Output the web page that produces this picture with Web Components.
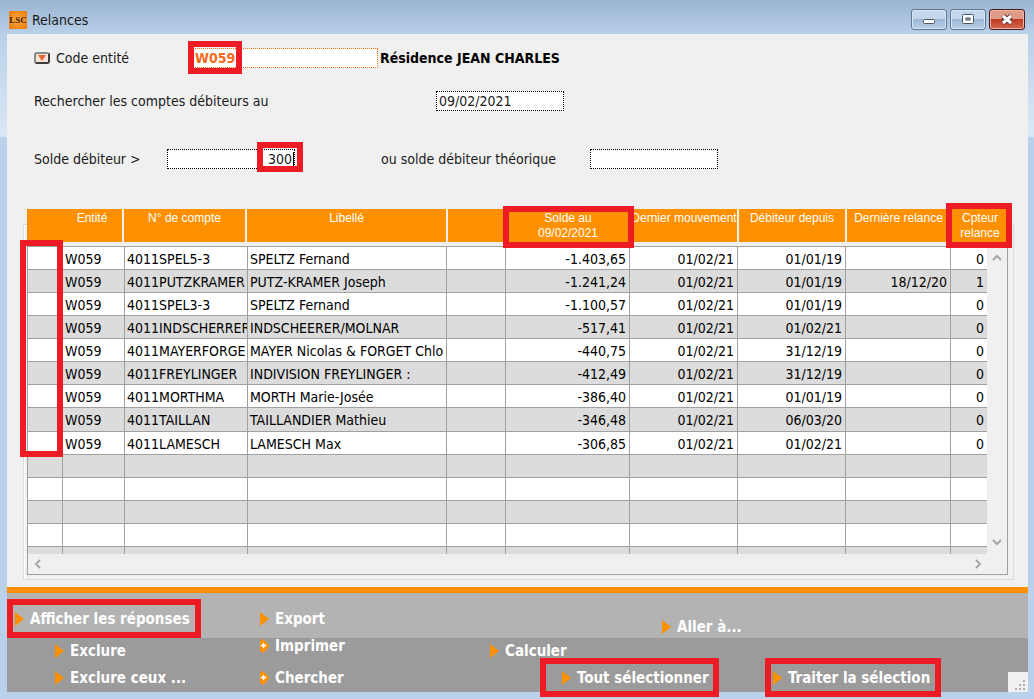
<!DOCTYPE html>
<html lang="fr">
<head>
<meta charset="utf-8">
<title>Relances</title>
<style>
  body {
    margin: 0;
    font-family: "DejaVu Sans Condensed", "DejaVu Sans", sans-serif;
    font-size: 14px;
    line-height: 16px;
    color: #1a1a1a;
  }
</style>
</head>
<body>
<app-window title="Relances">
  <search-form></search-form>
  <debtor-grid></debtor-grid>
  <action-bar slot="footer"></action-bar>
</app-window>

<script>
class RedFrame extends HTMLElement {
  constructor() {
    super();
    this.attachShadow({ mode: 'open' }).innerHTML = `
      <style>
        :host {
          position: absolute;
          box-sizing: border-box;
          border: 6px solid #ed1c24;
          pointer-events: none;
          z-index: 2;
        }
      </style>`;
  }
}
customElements.define('red-frame', RedFrame);


class AppWindow extends HTMLElement {
  constructor() {
    super();
    this.attachShadow({ mode: 'open' });
  }

  connectedCallback() {
    const title = this.getAttribute('title') || '';
    this.removeAttribute('title');

    this.shadowRoot.innerHTML = `
      <style>
        :host {
          display: flex;
          flex-direction: column;
          box-sizing: border-box;
          min-height: 100vh;
          padding: 0 6px 7px 7px;
          background: linear-gradient(#9ab4d1, #b9d0e9 34px, #dbe8f6 136px, #b9d1ea 138px);
        }

        header {
          display: flex;
          align-items: center;
          gap: 5px;
          height: 34px;
          padding: 0 3px 0 2px;
          box-sizing: border-box;
        }

        .logo {
          width: 18px;
          height: 18px;
          margin-top: 5px;
          background: radial-gradient(#ffab3c, #e8780c);
          color: #3a1c00;
          font: bold 9px/18px "Liberation Serif", serif;
          text-align: center;
        }

        h1 {
          flex: 1;
          margin: 6px 0 0;
          font-size: 14px;
          font-weight: normal;
        }

        .buttons {
          display: flex;
          gap: 3px;
          margin-top: 5px;
        }

        button {
          width: 36px;
          height: 21px;
          padding: 0;
          border: 1px solid #5f7690;
          border-radius: 3px;
          background: linear-gradient(#c3d6ec 50%, #9db8d6 50%, #b7cee8);
          box-shadow: inset 0 0 0 1px #d7e5f5;
        }

        .close {
          border-color: #4a1c1c;
          background: linear-gradient(#e09a88 50%, #bf3a22 50%, #d4694f);
          box-shadow: inset 0 0 0 1px #eab5a8;
        }

        svg {
          display: block;
          margin: auto;
        }

        main {
          flex: 1;
          padding: 14px 20px 12px;
          background: #f0f0f0;
        }
      </style>

      <header>
        <span class="logo">LSC</span>
        <h1>${title}</h1>
        <div class="buttons">
          <button aria-label="Réduire">
            <svg width="16" height="13"><rect x="2.500" y="6.500" width="11" height="4" rx="1" fill="#fff" stroke="#4d5666"/></svg>
          </button>
          <button aria-label="Agrandir">
            <svg width="16" height="13"><rect x="2.500" y="1.500" width="11" height="9" rx="1" fill="#fff" stroke="#4d5666"/><rect x="6" y="5" width="4" height="2" fill="#9db8d6" stroke="#4d5666"/></svg>
          </button>
          <button class="close" aria-label="Fermer">
            <svg width="16" height="13"><path d="M4 3l8 7M12 3l-8 7" stroke="#5b3038" stroke-width="5"/><path d="M4 3l8 7M12 3l-8 7" stroke="#fff" stroke-width="3"/></svg>
          </button>
        </div>
      </header>
      <main><slot></slot></main>
      <slot name="footer"></slot>
    `;
  }
}
customElements.define('app-window', AppWindow);


class SearchForm extends HTMLElement {
  constructor() {
    super();
    this.attachShadow({ mode: 'open' });
  }

  connectedCallback() {
    this.shadowRoot.innerHTML = `
      <style>
        :host {
          display: block;
          padding-left: 7px;
          margin-bottom: 40px;
        }

        .row {
          display: flex;
          align-items: center;
          height: 20px;
        }

        .row + .row { margin-top: 23px; }
        .row.last { margin-top: 38px; }

        label { white-space: nowrap; }
        .code { width: 134px; }
        .date { width: 402px; }
        .solde { width: 133px; }
        .theo { width: 209px; margin-left: 86px; }

        .picker {
          width: 16px;
          height: 12px;
          margin-right: 6px;
          padding: 0;
          border: 2px solid #3c3c3c;
          border-top-color: #8a8a8a;
          border-left-color: #8a8a8a;
          border-radius: 3px;
          background: #f6e4da;
        }

        .picker svg { display: block; margin: auto; }

        .field {
          position: relative;
          width: 128px;
        }

        .field.wide { width: 188px; }

        input {
          display: block;
          box-sizing: border-box;
          width: 100%;
          height: 20px;
          margin: 0;
          padding: 0 2px;
          border: 1px dotted #000;
          background: #fff;
          color: inherit;
          font: inherit;
        }

        .wide input {
          border: 1px dotted #ff6a10;
          padding-left: 4px;
          color: #f26a1b;
          font-weight: bold;
        }

        .amount input { text-align: right; }

        .amount::after {
          content: "";
          position: absolute;
          top: 3px;
          right: 1px;
          width: 1px;
          height: 14px;
          background: #000;
        }

        .wide red-frame {
          top: -7px;
          left: -2px;
          width: 54px;
          height: 33px;
        }

        .amount red-frame {
          top: -7px;
          right: -8px;
          width: 46px;
          height: 30px;
        }

        output {
          margin-left: 2px;
          color: #000;
          font-weight: bold;
        }
      </style>

      <div class="row">
        <button class="picker" aria-label="Choisir une entité">
          <svg width="10" height="8"><path d="M1 1h8L5 7z" fill="#e8662a"/></svg>
        </button>
        <label class="code" for="code">Code entité</label>
        <div class="field wide">
          <input id="code" value="W059">
          <red-frame></red-frame>
        </div>
        <output>Résidence JEAN CHARLES</output>
      </div>
      <div class="row">
        <label class="date" for="date">Rechercher les comptes débiteurs au</label>
        <div class="field"><input id="date" value="09/02/2021"></div>
      </div>
      <div class="row last">
        <label class="solde" for="solde">Solde débiteur &gt;</label>
        <div class="field amount">
          <input id="solde" value="300">
          <red-frame></red-frame>
        </div>
        <label class="theo" for="theo">ou solde débiteur théorique</label>
        <div class="field"><input id="theo"></div>
      </div>
    `;
  }
}
customElements.define('search-form', SearchForm);


const ROWS = [
  ['4011SPEL5-3', 'SPELTZ Fernand', '-1.403,65', '01/02/21', '01/01/19', '', '0'],
  ['4011PUTZKRAMER', 'PUTZ-KRAMER Joseph', '-1.241,24', '01/02/21', '01/01/19', '18/12/20', '1'],
  ['4011SPEL3-3', 'SPELTZ Fernand', '-1.100,57', '01/02/21', '01/01/19', '', '0'],
  ['4011INDSCHERRER', 'INDSCHEERER/MOLNAR', '-517,41', '01/02/21', '01/02/21', '', '0'],
  ['4011MAYERFORGE', 'MAYER Nicolas & FORGET Chlo', '-440,75', '01/02/21', '31/12/19', '', '0'],
  ['4011FREYLINGER', 'INDIVISION FREYLINGER :', '-412,49', '01/02/21', '31/12/19', '', '0'],
  ['4011MORTHMA', 'MORTH Marie-Josée', '-386,40', '01/02/21', '01/01/19', '', '0'],
  ['4011TAILLAN', 'TAILLANDIER Mathieu', '-346,48', '01/02/21', '06/03/20', '', '0'],
  ['4011LAMESCH', 'LAMESCH Max', '-306,85', '01/02/21', '01/02/21', '', '0'],
];
const ROW_COUNT = 14;

class DebtorGrid extends HTMLElement {
  constructor() {
    super();
    this.attachShadow({ mode: 'open' });
  }

  connectedCallback() {
    this.shadowRoot.innerHTML = `
      <style>
        :host {
          display: block;
          position: relative;
          isolation: isolate;
        }

        /* group box line round the grid */
        :host::before {
          content: "";
          position: absolute;
          inset: 15px -6px -5px -4px;
          border: 1px solid #dcdcdc;
          box-shadow: inset 1px 1px #fff;
          z-index: -1;
        }

        table {
          width: 100%;
          table-layout: fixed;
          border-collapse: separate;
          border-spacing: 0;
        }

        th {
          position: relative;
          height: 31px;
          padding: 2px 0 0;
          box-sizing: content-box;
          border-left: 2px solid #f0f0f0;
          border-bottom: 4px solid #f0f0f0;
          background: #ff9100;
          background-clip: padding-box;
          color: #fff;
          font: 12px/15px "Liberation Sans", sans-serif;
          vertical-align: top;
          white-space: nowrap;
        }

        th:nth-child(-n+4) { border-left: 0; }
        th:nth-child(2), th:nth-child(3) { border-right: 2px solid #f0f0f0; }

        td {
          height: 20px;
          padding: 2px 3px 0 2px;
          border-top: 1px solid #a0a0a0;
          border-left: 1px solid #a0a0a0;
          background: #fff;
          color: #000;
          line-height: 20px;
          overflow: hidden;
          white-space: nowrap;
        }

        tr:nth-child(even) td { background: #dcdcdc; }
        tr:last-child td { height: 5px; line-height: 5px; }
        .num { text-align: right; }

        tr td.vscroll {
          height: auto;
          padding: 6px 0;
          border-left: 0;
          border-right: 1px solid #a0a0a0;
          background: #f0f0f0;
          line-height: 0;
          vertical-align: top;
        }

        .track {
          display: flex;
          flex-direction: column;
          justify-content: space-between;
          align-items: center;
          height: 295px;
        }

        .hscroll {
          display: flex;
          justify-content: space-between;
          align-items: center;
          height: 21px;
          box-sizing: border-box;
          padding: 0 23px 0 4px;
          border: 1px solid #a0a0a0;
          border-top: 0;
          background: #f0f0f0;
        }

        button {
          width: 12px;
          height: 12px;
          padding: 0;
          border: 0;
          background: none;
        }

        svg {
          display: block;
          fill: none;
          stroke: #a8a8a8;
          stroke-width: 2;
        }

        .checks {
          top: 31px;
          left: -7px;
          width: 43px;
          height: 217px;
        }

        th red-frame { inset: -3px -5px -6px -4px; }
        th:last-child red-frame { inset: -6px -4px -6px -6px; }
      </style>

      <table>
        <colgroup>
          <col style="width: 35px"><col style="width: 62px"><col style="width: 123px">
          <col><col style="width: 59px"><col style="width: 124px">
          <col style="width: 108px"><col style="width: 108px"><col style="width: 105px">
          <col style="width: 37px"><col style="width: 21px">
        </colgroup>
        <thead>
          <tr>
            <th></th>
            <th>Entité</th>
            <th>N° de compte</th>
            <th>Libellé</th>
            <th></th>
            <th>Solde au<br>09/02/2021<red-frame></red-frame></th>
            <th>Dernier mouvement</th>
            <th>Débiteur depuis</th>
            <th>Dernière relance</th>
            <th colspan="2">Cpteur<br>relance<red-frame></red-frame></th>
          </tr>
        </thead>
        <tbody></tbody>
      </table>
      <div class="hscroll">
        <button aria-label="Gauche"><svg width="12" height="12"><path d="M8 2L4 6l4 4"/></svg></button>
        <button aria-label="Droite"><svg width="12" height="12"><path d="M4 2l4 4-4 4"/></svg></button>
      </div>
      <red-frame class="checks"></red-frame>
    `;

    const body = this.shadowRoot.querySelector('tbody');
    for (let i = 0; i < ROW_COUNT; i++) {
      const tr = body.insertRow();
      const row = ROWS[i];
      const cells = row ? ['', 'W059', row[0], row[1], '', ...row.slice(2)] : Array(10).fill('');
      cells.forEach((text, n) => {
        const td = tr.insertCell();
        td.textContent = text;
        if (n > 4) td.className = 'num';
      });
    }

    const scroll = body.rows[0].insertCell();
    scroll.rowSpan = ROW_COUNT;
    scroll.className = 'vscroll';
    scroll.innerHTML = `
      <div class="track">
        <button aria-label="Haut"><svg width="12" height="12"><path d="M2 7l4-4 4 4"/></svg></button>
        <button aria-label="Bas"><svg width="12" height="12"><path d="M2 4l4 4 4-4"/></svg></button>
      </div>`;
  }
}
customElements.define('debtor-grid', DebtorGrid);


class ActionLink extends HTMLElement {
  constructor() {
    super();
    this.attachShadow({ mode: 'open' });
  }

  connectedCallback() {
    const icon = this.hasAttribute('plus')
      ? '<path d="M0 2l3-2 6 6v2l-6 6-3-2z" fill="#ff9100"/><path d="M1 6h2v-2h1v2h2v1h-2v2h-1v-2h-2z" fill="#fff" stroke="#fff" stroke-width=".6"/>'
      : '<path d="M0 0l9 7-9 7z" fill="#ff9100"/>';

    this.shadowRoot.innerHTML = `
      <style>
        :host {
          display: block;
          position: relative;
          width: max-content;
        }

        button {
          display: flex;
          align-items: center;
          gap: 6px;
          padding: 0;
          border: 0;
          background: none;
          color: #fff;
          font: bold 15px/16px "DejaVu Sans Condensed", "DejaVu Sans", sans-serif;
          white-space: nowrap;
        }

        red-frame { inset: -12px -11px -11px -8px; }
        :host([wide]) red-frame { left: -22px; right: -10px; }
      </style>
      <button>
        <svg width="9" height="14">${icon}</svg>
        <slot></slot>
      </button>
      ${this.hasAttribute('framed') ? '<red-frame></red-frame>' : ''}
    `;
  }
}
customElements.define('action-link', ActionLink);


class ActionBar extends HTMLElement {
  constructor() {
    super();
    this.attachShadow({ mode: 'open' });
  }

  connectedCallback() {
    this.shadowRoot.innerHTML = `
      <style>
        :host {
          display: block;
          position: relative;
          border-top: 6px solid #ff9100;
        }

        .band {
          display: grid;
          grid-template-columns: minmax(0, 245fr) minmax(0, 230fr) minmax(0, 172fr) minmax(0, 366fr);
          padding-left: 8px;
          box-sizing: border-box;
        }

        .top {
          height: 45px;
          padding-top: 9px;
          padding-bottom: 3px;
          align-items: center;
          background: #b3b3b3;
        }

        .bottom {
          height: 54px;
          padding-bottom: 6px;
          background: #9b9b9b;
        }

        .col {
          display: flex;
          flex-direction: column;
          justify-content: space-between;
        }

        .low { padding-top: 5px; }
        .inset { padding-left: 40px; }
        .end { align-self: end; }
        .tout { margin-left: 72px; }
        .traiter { margin: auto 0 0 111px; }

        .grip {
          position: absolute;
          right: 0;
          bottom: 0;
          background: #f0f0f0;
        }
      </style>

      <div class="band top">
        <action-link framed>Afficher les réponses</action-link>
        <action-link>Export</action-link>
        <span></span>
        <action-link class="end">Aller à...</action-link>
      </div>
      <div class="band bottom">
        <div class="col low inset">
          <action-link>Exclure</action-link>
          <action-link>Exclure ceux ...</action-link>
        </div>
        <div class="col">
          <action-link plus>Imprimer</action-link>
          <action-link plus>Chercher</action-link>
        </div>
        <div class="col low">
          <action-link>Calculer</action-link>
          <action-link class="tout" framed wide>Tout sélectionner</action-link>
        </div>
        <div class="col">
          <action-link class="traiter" framed>Traiter la sélection</action-link>
        </div>
      </div>
      <svg class="grip" width="20" height="20" fill="#b0b0b0">
        <path d="M15 8h2v2h-2zM11 12h2v2h-2zM15 12h2v2h-2zM7 16h2v2h-2zM11 16h2v2h-2zM15 16h2v2h-2z"/>
      </svg>
    `;
  }
}
customElements.define('action-bar', ActionBar);
</script>
</body>
</html>
